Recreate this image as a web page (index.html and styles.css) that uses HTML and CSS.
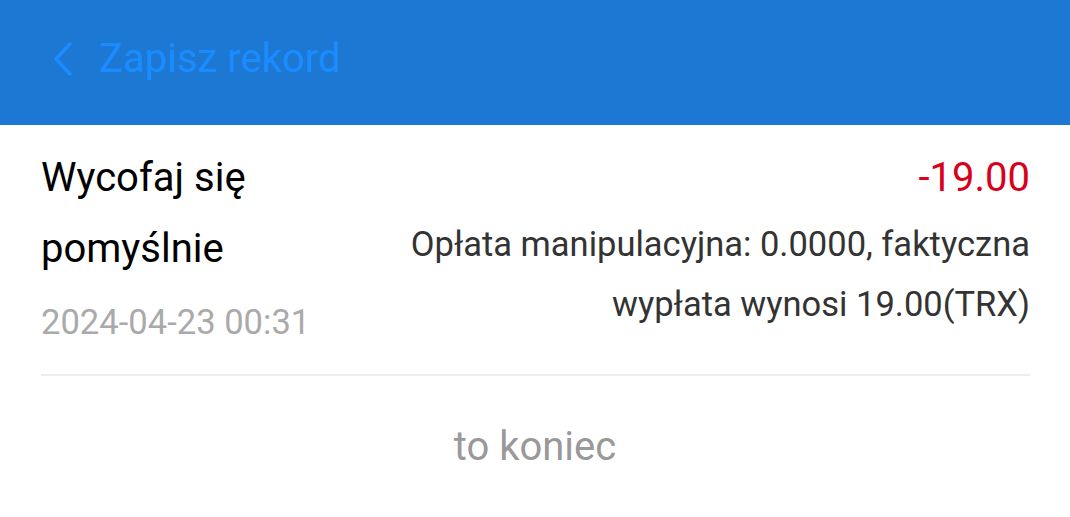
FILE: index.html
```html
<!DOCTYPE html>
<html>
<head>
  <meta charset="UTF-8">
  <title>Zapisz rekord</title>
  <link rel="stylesheet" href="styles.css">
</head>
<body>
  <header class="nav_bar">
    <a class="back" href="#">
      <svg width="24" height="36" viewBox="0 0 24 36">
        <path d="M20 3 L6 18 L20 33" fill="none" stroke="currentColor" stroke-width="3.5" stroke-linecap="round" stroke-linejoin="round"/>
      </svg>
      <span class="title">Zapisz rekord</span>
    </a>
  </header>

  <div class="record_list">
    <div class="record">
      <div class="record_left">
        <p class="status">Wycofaj się pomyślnie</p>
        <p class="time">2024-04-23 00:31</p>
      </div>
      <div class="record_right">
        <p class="amount">-19.00</p>
        <p class="desc">Opłata manipulacyjna: 0.0000, faktyczna wypłata wynosi 19.00(TRX)</p>
      </div>
    </div>
  </div>

  <p class="list_end">to koniec</p>
</body>
</html>
```

FILE: styles.css
```css
body {
  margin: 0;
  font-family: Roboto, "Liberation Sans", Arial, sans-serif;
  background: #fff;
}
p { margin: 0; }

.nav_bar {
  height: 125px;
  box-sizing: border-box;
  background: #1d78d3;
  display: flex;
  align-items: center;
  padding: 0 0 8px 50px;
}
  .nav_bar .back {
    display: flex;
    align-items: center;
    color: #1a8cff;
    text-decoration: none;
  }
  .nav_bar svg {
    margin-right: 25px;
  }
  .nav_bar .title {
    font-size: 40px;
  }

.record_list {
  padding: 0 40px 0 41px;
}
.record {
  display: flex;
  justify-content: space-between;
  padding: 17px 0 14px;
  border-bottom: 2px solid #eeeeee;
}
  .record_left {
    width: 300px;
  }
  .record .status {
    font-size: 40px;
    line-height: 71px;
    color: #000;
  }
  .record .time {
    font-size: 34.6px;
    line-height: 76px;
    color: #aaaaaa;
  }
  .record_right {
    width: 640px;
    text-align: right;
  }
  .record .amount {
    font-size: 40px;
    line-height: 72px;
    color: #d9001b;
  }
  .record .desc {
    font-size: 34.5px;
    line-height: 60px;
    color: #333;
  }

.list_end {
  text-align: center;
  font-size: 40px;
  color: #999;
  padding-top: 47px;
}
```
